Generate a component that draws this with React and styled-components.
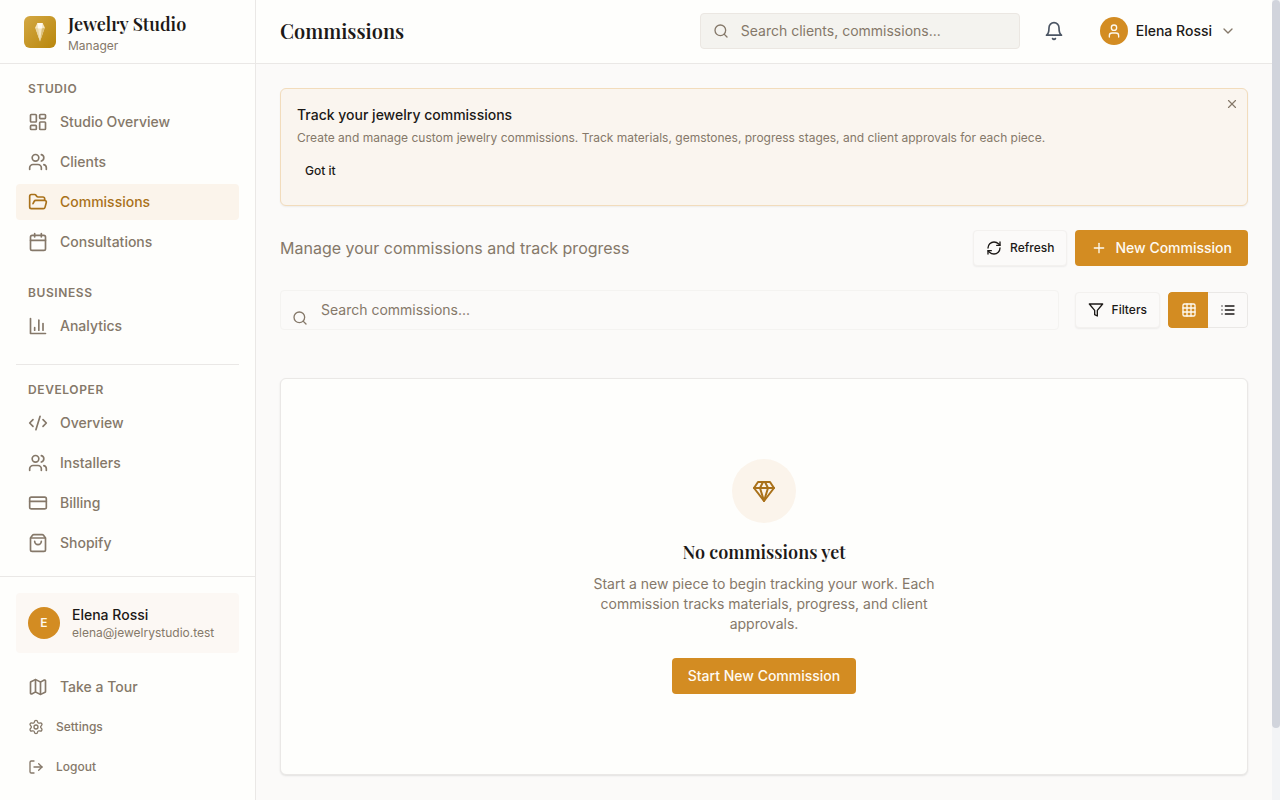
import React, { useCallback, useEffect, useRef, useState } from 'react';
import styled, { createGlobalStyle, css } from 'styled-components';
import {
    Calendar,
    ChevronDown,
    CodeXml,
    CreditCard,
    FolderOpen,
    Grid3x3,
    LayoutDashboard,
    LogOut,
    Map,
    Plus,
    RefreshCw,
    Search,
    Settings,
    ShoppingBag,
    User,
    Users,
    X,
} from 'lucide-react';

const colors = {
    page: '#fbfaf9',
    surface: '#fefefc',
    line: '#eae8e6',
    text: '#1c1917',
    muted: '#857869',
    gold: '#d38c22',
    goldDark: '#a9711a',
    goldTint: '#fbf4eb',
};

const serif = '"Playfair Display", "Liberation Serif", serif';

const GlobalStyle = createGlobalStyle`
    * {
        box-sizing: border-box;
    }

    body {
        margin: 0;
        font-family: Inter, "Liberation Sans", sans-serif;
        font-size: 14px;
        line-height: 20px;
        color: ${colors.text};
        background: ${colors.page};
    }

    h1, h2, h3, p {
        margin: 0;
    }

    button, input {
        font: inherit;
        color: inherit;
    }

    svg {
        display: block;
        flex-shrink: 0;
    }
`;

const Layout = styled.div`
    display: flex;
    height: 100vh;
`;

const Sidebar = styled.aside`
    display: flex;
    flex-direction: column;
    flex: 0 0 256px;
    background: ${colors.surface};
    border-right: 1px solid ${colors.line};
`;

const Brand = styled.div`
    display: flex;
    align-items: center;
    gap: 12px;
    height: 64px;
    padding: 0 24px;
    border-bottom: 1px solid ${colors.line};
`;

const BrandName = styled.div`
    font-family: ${serif};
    font-size: 18px;
    font-weight: 600;
    line-height: 28px;
    white-space: nowrap;
`;

const BrandRole = styled.div`
    font-size: 12px;
    line-height: 16px;
    color: ${colors.muted};
`;

const Nav = styled.nav`
    flex: 1;
    min-height: 0;
    overflow: hidden;
    padding: 16px;
`;

const NavSection = styled.section`
    display: flex;
    flex-direction: column;
    gap: 4px;

    & + & {
        margin-top: 24px;
    }

    ${props => props.$divided && css`
        && {
            margin-top: 20px;
            padding-top: 16px;
            border-top: 1px solid ${colors.line};
        }
    `}
`;

const NavTitle = styled.h3`
    margin-bottom: 2px;
    padding: 0 12px;
    font-size: 12px;
    font-weight: 600;
    line-height: 18px;
    letter-spacing: 0.05em;
    text-transform: uppercase;
    color: ${colors.muted};
`;

const itemStyle = css`
    display: flex;
    align-items: center;
    gap: 12px;
    width: 100%;
    height: 36px;
    padding: 0 12px;
    border: none;
    border-radius: 4px;
    background: none;
    font-size: 14px;
    font-weight: 500;
    color: ${colors.muted};
    text-decoration: none;
    cursor: pointer;
`;

const NavLink = styled.a`
    ${itemStyle}

    ${props => props.$active && css`
        color: ${colors.goldDark};
        background: ${colors.goldTint};
    `}
`;

const NavButton = styled.button`
    ${itemStyle}

    ${props => props.$small && css`
        font-size: 12px;
    `}
`;

const SidebarFooter = styled.div`
    display: flex;
    flex-direction: column;
    gap: 4px;
    padding: 16px 16px 15px;
    border-top: 1px solid ${colors.line};
`;

const Account = styled.div`
    display: flex;
    align-items: center;
    gap: 12px;
    margin-bottom: 12px;
    padding: 12px;
    border-radius: 4px;
    background: #fcf8f4;
`;

const Avatar = styled.span`
    display: flex;
    align-items: center;
    justify-content: center;
    flex-shrink: 0;
    width: ${props => props.$size}px;
    height: ${props => props.$size}px;
    border-radius: 50%;
    font-size: 12px;
    font-weight: 600;
    color: #fdf8ee;
    background: ${colors.gold};
`;

const AccountName = styled.div`
    font-weight: 500;
`;

const AccountMail = styled.div`
    font-size: 12px;
    line-height: 16px;
    color: ${colors.muted};
`;

const Main = styled.div`
    flex: 1;
    min-width: 0;
    overflow-y: auto;
    scrollbar-width: none;
`;

const ScrollTrack = styled.div`
    flex: 0 0 8px;
    background: #f3f4f6;
`;

const ScrollThumb = styled.div`
    border-radius: 4px;
    background: #d1d4dc;
`;

const Header = styled.header`
    position: sticky;
    top: 0;
    z-index: 1;
    display: flex;
    align-items: center;
    gap: 16px;
    height: 64px;
    padding: 0 24px 1px;
    background: ${colors.surface};
    border-bottom: 1px solid ${colors.line};
`;

const PageTitle = styled.h1`
    flex: 1;
    font-family: ${serif};
    font-size: 20px;
    font-weight: 600;
    line-height: 28px;
`;

const HeaderSearch = styled.label`
    display: flex;
    align-items: center;
    gap: 12px;
    width: 320px;
    height: 36px;
    padding: 0 12px;
    border: 1px solid #ebe7e2;
    border-radius: 4px;
    color: ${colors.muted};
    background: #f4f3ef;
`;

const SearchInput = styled.input`
    flex: 1;
    min-width: 0;
    padding: 0;
    border: none;
    outline: none;
    background: none;
    color: ${colors.text};

    &::placeholder {
        color: ${colors.muted};
        opacity: 1;
    }
`;

const IconButton = styled.button`
    display: flex;
    align-items: center;
    justify-content: center;
    width: 36px;
    height: 36px;
    padding: 0;
    border: none;
    border-radius: 4px;
    background: none;
    color: #4b5563;
    cursor: pointer;
`;

const UserMenu = styled.button`
    display: flex;
    align-items: center;
    gap: 8px;
    height: 36px;
    padding: 0 12px;
    border: none;
    background: none;
    font-weight: 500;
    cursor: pointer;

    > svg {
        color: ${colors.muted};
    }
`;

const Content = styled.main`
    display: flex;
    flex-direction: column;
    gap: 24px;
    padding: 24px 24px 104px;
`;

const Banner = styled.section`
    position: relative;
    padding: 16px 16px 18px;
    border: 1px solid #f2dcbc;
    border-radius: 6px;
    background: #faf5ef;
    box-shadow: 0 1px 2px rgba(0, 0, 0, 0.06);
`;

const BannerTitle = styled.h2`
    font-size: 14px;
    font-weight: 500;
    line-height: 20px;
`;

const BannerText = styled.p`
    margin: 4px 0 8px;
    font-size: 12px;
    line-height: 18px;
    color: ${colors.muted};
`;

const BannerAction = styled.button`
    height: 32px;
    padding: 0 8px;
    border: none;
    background: none;
    font-size: 12px;
    font-weight: 500;
    cursor: pointer;
`;

const BannerClose = styled.button`
    position: absolute;
    top: 8px;
    right: 8px;
    padding: 0;
    border: none;
    background: none;
    color: ${colors.muted};
    cursor: pointer;
`;

const Row = styled.div`
    display: flex;
    align-items: center;
    gap: 8px;
`;

const Lead = styled.p`
    flex: 1;
    font-size: 16px;
    line-height: 24px;
    color: ${colors.muted};
`;

const Button = styled.button`
    display: inline-flex;
    align-items: center;
    justify-content: center;
    gap: 8px;
    height: 36px;
    padding: 0 12px;
    border: 1px solid #f3f1ef;
    border-radius: 4px;
    background: ${colors.page};
    font-size: 12px;
    font-weight: 500;
    white-space: nowrap;
    box-shadow: 0 1px 2px rgba(0, 0, 0, 0.06);
    cursor: pointer;

    ${props => props.$primary && css`
        padding: 0 16px;
        border: none;
        background: ${colors.gold};
        color: #fefaf2;
        font-size: 14px;
        box-shadow: none;
    `}
`;

const FilterSearch = styled.label`
    position: relative;
    display: flex;
    flex: 1;
    height: 40px;
    margin-right: 8px;
    padding: 0 12px 0 40px;
    border: 1px solid #f4f3f1;
    border-radius: 4px;
    color: ${colors.muted};

    svg {
        position: absolute;
        left: 11px;
        bottom: 3px;
    }
`;

const Toggle = styled.div`
    display: flex;
    height: 36px;
    border-radius: 4px;
    overflow: hidden;
`;

const ToggleButton = styled.button`
    display: flex;
    align-items: center;
    justify-content: center;
    width: 40px;
    padding: 0;
    border: 1px solid ${props => (props.$on ? colors.gold : colors.line)};
    background: ${props => (props.$on ? colors.gold : colors.page)};
    color: ${props => (props.$on ? '#fefaf2' : colors.text)};
    cursor: pointer;

    &:first-child {
        border-right: none;
        border-radius: 4px 0 0 4px;
    }

    &:last-child {
        border-left: none;
        border-radius: 0 4px 4px 0;
    }
`;

const EmptyCard = styled.section`
    display: flex;
    flex-direction: column;
    align-items: center;
    margin-top: 24px;
    padding: 80px 24px;
    border: 1px solid ${colors.line};
    border-radius: 6px;
    background: ${colors.surface};
    box-shadow: 0 1px 2px rgba(0, 0, 0, 0.1);
    text-align: center;
`;

const EmptyIcon = styled.div`
    display: flex;
    align-items: center;
    justify-content: center;
    width: 64px;
    height: 64px;
    margin-bottom: 16px;
    border-radius: 50%;
    color: ${colors.goldDark};
    background: ${colors.goldTint};
`;

const EmptyTitle = styled.h3`
    margin-bottom: 8px;
    font-family: ${serif};
    font-size: 18px;
    font-weight: 600;
    line-height: 27px;
`;

const EmptyText = styled.p`
    max-width: 384px;
    margin-bottom: 24px;
    color: ${colors.muted};
`;

const Logo = () => (
    <svg width="32" height="32" viewBox="0 0 32 32" aria-hidden="true">
        <defs>
            <linearGradient id="logo-bg" x1="0" y1="0" x2="1" y2="1">
                <stop offset="0" stopColor="#d4a843" />
                <stop offset="1" stopColor="#b8860b" />
            </linearGradient>
        </defs>
        <rect width="32" height="32" rx="6" fill="url(#logo-bg)" />
        <path d="M13.4 7h5.2l2.2 4.6L16 25.4l-4.8-13.8z" fill="#f5e6c2" />
        <path d="M13.4 7h5.2l-.8 5.4h-3.6z" fill="#fffaf0" />
        <path d="M11.2 11.6l3 .8L16 25.4z" fill="#ead6a2" />
        <path d="M20.8 11.6l-3 .8L16 25.4z" fill="#dcc078" />
    </svg>
);

const LineIcon = ({ size, children }) => (
    <svg
        width={size}
        height={size}
        viewBox="0 0 24 24"
        fill="none"
        stroke="currentColor"
        strokeWidth="2"
        strokeLinecap="round"
        strokeLinejoin="round"
        aria-hidden="true"
    >
        {children}
    </svg>
);

const BarChart = ({ size }) => (
    <LineIcon size={size}>
        <path d="M3 3v18h18" />
        <path d="M18 17V9" />
        <path d="M13 17V5" />
        <path d="M8 17v-3" />
    </LineIcon>
);

const Gem = ({ size }) => (
    <LineIcon size={size}>
        <path d="M6 3h12l4 6-10 13L2 9Z" />
        <path d="M11 3 8 9l4 13 4-13-3-6" />
        <path d="M2 9h20" />
    </LineIcon>
);

const Bell = ({ size }) => (
    <LineIcon size={size}>
        <path d="M6 8a6 6 0 0 1 12 0c0 7 3 9 3 9H3s3-2 3-9" />
        <path d="M10.3 21a1.94 1.94 0 0 0 3.4 0" />
    </LineIcon>
);

const Filter = ({ size }) => (
    <LineIcon size={size}>
        <path d="M22 3H2l8 9.46V19l4 2v-8.54L22 3z" />
    </LineIcon>
);

const List = ({ size }) => (
    <LineIcon size={size}>
        <path d="M8 6h13M8 12h13M8 18h13" />
        <path d="M3 6h.01M3 12h.01M3 18h.01" />
    </LineIcon>
);

const sections = [
    {
        title: 'Studio',
        items: [
            { label: 'Studio Overview', icon: LayoutDashboard },
            { label: 'Clients', icon: Users },
            { label: 'Commissions', icon: FolderOpen, active: true },
            { label: 'Consultations', icon: Calendar },
        ],
    },
    {
        title: 'Business',
        items: [{ label: 'Analytics', icon: BarChart }],
    },
    {
        title: 'Developer',
        divided: true,
        items: [
            { label: 'Overview', icon: CodeXml },
            { label: 'Installers', icon: Users },
            { label: 'Billing', icon: CreditCard },
            { label: 'Shopify', icon: ShoppingBag },
        ],
    },
];

const SideMenu = () => (
    <Sidebar>
        <Brand>
            <Logo />
            <div>
                <BrandName>Jewelry Studio</BrandName>
                <BrandRole>Manager</BrandRole>
            </div>
        </Brand>
        <Nav>
            {sections.map(section => (
                <NavSection key={section.title} $divided={section.divided}>
                    <NavTitle>{section.title}</NavTitle>
                    {section.items.map(({ label, icon: Icon, active }) => (
                        <NavLink key={label} href="#" $active={active}>
                            <Icon size={20} />
                            {label}
                        </NavLink>
                    ))}
                </NavSection>
            ))}
        </Nav>
        <SidebarFooter>
            <Account>
                <Avatar $size={32}>E</Avatar>
                <div>
                    <AccountName>Elena Rossi</AccountName>
                    <AccountMail>elena@jewelrystudio.test</AccountMail>
                </div>
            </Account>
            <NavButton type="button"><Map size={20} />Take a Tour</NavButton>
            <NavButton type="button" $small><Settings size={16} />Settings</NavButton>
            <NavButton type="button" $small><LogOut size={16} />Logout</NavButton>
        </SidebarFooter>
    </Sidebar>
);

const App = () => {
    const [view, setView] = useState('grid');
    const [showTip, setShowTip] = useState(true);
    const [thumb, setThumb] = useState({ height: 0, top: 0 });
    const mainRef = useRef(null);

    const measure = useCallback(() => {
        const { clientHeight, scrollHeight, scrollTop } = mainRef.current;
        const ratio = clientHeight / scrollHeight;
        setThumb({ height: ratio < 1 ? clientHeight * ratio : 0, top: scrollTop * ratio });
    }, []);

    useEffect(() => {
        measure();
        window.addEventListener('resize', measure);
        return () => window.removeEventListener('resize', measure);
    }, [measure, showTip]);

    return (
        <Layout>
            <GlobalStyle />
            <SideMenu />
            <Main ref={mainRef} onScroll={measure}>
                <Header>
                    <PageTitle>Commissions</PageTitle>
                    <HeaderSearch>
                        <Search size={16} />
                        <SearchInput type="text" aria-label="Search clients, commissions" placeholder="Search clients, commissions..." />
                    </HeaderSearch>
                    <IconButton type="button" aria-label="Notifications"><Bell size={20} /></IconButton>
                    <UserMenu type="button">
                        <Avatar $size={28}><User size={16} /></Avatar>
                        Elena Rossi
                        <ChevronDown size={16} />
                    </UserMenu>
                </Header>
                <Content>
                    {showTip && (
                        <Banner>
                            <BannerTitle>Track your jewelry commissions</BannerTitle>
                            <BannerText>
                                Create and manage custom jewelry commissions. Track materials, gemstones, progress stages, and client approvals for each piece.
                            </BannerText>
                            <BannerAction type="button" onClick={() => setShowTip(false)}>Got it</BannerAction>
                            <BannerClose type="button" aria-label="Dismiss" onClick={() => setShowTip(false)}>
                                <X size={14} />
                            </BannerClose>
                        </Banner>
                    )}
                    <Row>
                        <Lead>Manage your commissions and track progress</Lead>
                        <Button type="button"><RefreshCw size={16} />Refresh</Button>
                        <Button type="button" $primary><Plus size={16} />New Commission</Button>
                    </Row>
                    <Row>
                        <FilterSearch>
                            <Search size={16} />
                            <SearchInput type="text" aria-label="Search commissions" placeholder="Search commissions..." />
                        </FilterSearch>
                        <Button type="button"><Filter size={16} />Filters</Button>
                        <Toggle>
                            <ToggleButton type="button" aria-label="Grid view" $on={view === 'grid'} onClick={() => setView('grid')}>
                                <Grid3x3 size={16} />
                            </ToggleButton>
                            <ToggleButton type="button" aria-label="List view" $on={view === 'list'} onClick={() => setView('list')}>
                                <List size={16} />
                            </ToggleButton>
                        </Toggle>
                    </Row>
                    <EmptyCard>
                        <EmptyIcon><Gem size={24} /></EmptyIcon>
                        <EmptyTitle>No commissions yet</EmptyTitle>
                        <EmptyText>
                            Start a new piece to begin tracking your work. Each commission tracks materials, progress, and client approvals.
                        </EmptyText>
                        <Button type="button" $primary>Start New Commission</Button>
                    </EmptyCard>
                </Content>
            </Main>
            <ScrollTrack aria-hidden="true">
                <ScrollThumb style={{ height: thumb.height, marginTop: thumb.top }} />
            </ScrollTrack>
        </Layout>
    );
};

export default App;
